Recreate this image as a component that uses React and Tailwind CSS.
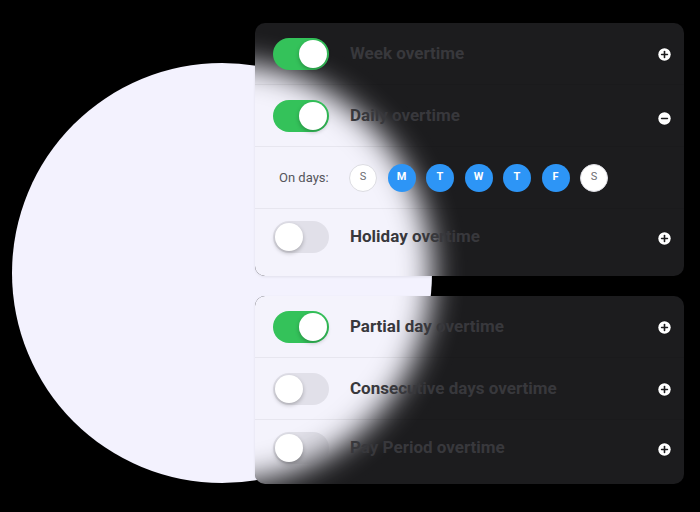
import React from 'react';

const font = { fontFamily: 'Roboto, "Noto Sans", sans-serif' };

function Toggle({ on }) {
  return (
    <div
      className={`relative w-[56px] h-[32px] rounded-full shrink-0 ${
        on ? 'bg-[#34c25a]' : 'bg-[#787880]/15'
      }`}
    >
      <div
        className={`absolute top-[2px] w-[28px] h-[28px] rounded-full bg-white shadow-[0_2px_4px_rgba(0,0,0,0.25)] ${
          on ? 'left-[26px]' : 'left-[2px]'
        }`}
      />
    </div>
  );
}

function RoundIcon({ minus }) {
  return (
    <svg width="15" height="15" viewBox="0 0 15 15" className="shrink-0">
      <circle cx="7.5" cy="7.5" r="7" fill="#111" opacity="0.4" />
      <circle cx="7.5" cy="7.5" r="6.2" fill="#fff" />
      <path d="M4.6 7.5h5.8" stroke="#1c1c1e" strokeWidth="1.6" strokeLinecap="round" />
      {!minus && <path d="M7.5 4.6v5.8" stroke="#1c1c1e" strokeWidth="1.6" strokeLinecap="round" />}
    </svg>
  );
}

function Row({ on, label, minus, last, rowClass = 'h-[62px]' }) {
  return (
    <div
      className={`flex items-center pl-[18px] pr-[12px] ${rowClass} ${
        last ? '' : 'border-b border-black/5'
      }`}
    >
      <Toggle on={on} />
      <div className="ml-[21px] flex-1 text-[17px] font-bold text-[#38383c]">{label}</div>
      <div className={minus ? 'mt-[6px]' : 'mt-[2px]'}>
        <RoundIcon minus={minus} />
      </div>
    </div>
  );
}

function DaysRow() {
  const days = [
    { d: 'S', on: false },
    { d: 'M', on: true },
    { d: 'T', on: true },
    { d: 'W', on: true },
    { d: 'T', on: true },
    { d: 'F', on: true },
    { d: 'S', on: false },
  ];
  return (
    <div className="flex items-center h-[62px] pl-[24px] border-b border-black/5">
      <div className="w-[70px] text-[13px] text-[#55555b]">On days:</div>
      <div className="flex gap-[10.5px]">
        {days.map((x, i) => (
          <div
            key={i}
            className={`w-[28px] h-[28px] rounded-full flex items-center justify-center text-[11px] ${
              x.on
                ? 'bg-[#2d95f6] text-white font-bold'
                : 'bg-white border border-[#dcdce2] text-[#6b6b70]'
            }`}
          >
            {x.d}
          </div>
        ))}
      </div>
    </div>
  );
}

function Card({ lensTop, children }) {
  return (
    <div className="relative overflow-hidden rounded-[10px] bg-[#1c1c1e] shadow-[0_1px_3px_rgba(0,0,0,0.08)]">
      <div
        className="absolute left-[-243px] w-[420px] h-[420px] rounded-full bg-[#f4f3fc] blur-[15px]"
        style={{ top: lensTop }}
      />
      <div className="relative">{children}</div>
    </div>
  );
}

export default function App() {
  return (
    <div className="relative w-[700px] h-[512px] bg-black overflow-hidden" style={font}>
      <div className="absolute left-[12px] top-[63px] w-[420px] h-[420px] rounded-full bg-[#f3f2fe]" />
      <div className="relative flex flex-col gap-[20px] pl-[255px] pr-[16px] pt-[23px]">
        <Card lensTop={40}>
          <Row on label="Week overtime" />
          <Row on label="Daily overtime" minus />
          <DaysRow />
          <Row label="Holiday overtime" last rowClass="h-[67px] pb-[11px]" />
        </Card>
        <Card lensTop={-233}>
          <Row on label="Partial day overtime" />
          <Row label="Consecutive days overtime" />
          <Row label="Pay Period overtime" last rowClass="h-[64px] pb-[8px]" />
        </Card>
      </div>
    </div>
  );
}
